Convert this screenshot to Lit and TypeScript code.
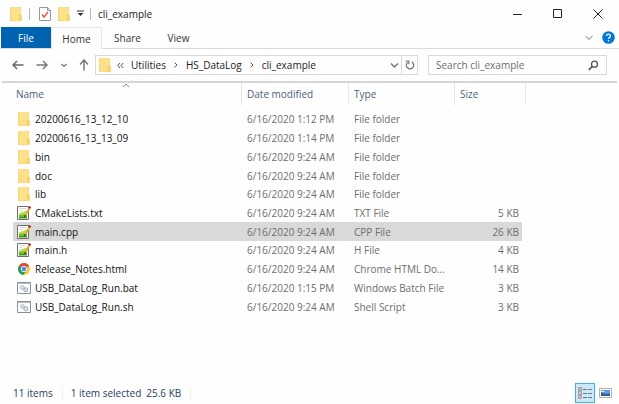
import { LitElement, html, css, svg, nothing } from "lit";
import { customElement, property } from "lit/decorators.js";

type Kind = "folder" | "text" | "chrome" | "script";

interface Entry {
  name: string;
  date: string;
  type: string;
  size: string;
  kind: Kind;
}

const entries: Entry[] = [
  { name: "20200616_13_12_10", date: "6/16/2020 1:12 PM", type: "File folder", size: "", kind: "folder" },
  { name: "20200616_13_13_09", date: "6/16/2020 1:14 PM", type: "File folder", size: "", kind: "folder" },
  { name: "bin", date: "6/16/2020 9:24 AM", type: "File folder", size: "", kind: "folder" },
  { name: "doc", date: "6/16/2020 9:24 AM", type: "File folder", size: "", kind: "folder" },
  { name: "lib", date: "6/16/2020 9:24 AM", type: "File folder", size: "", kind: "folder" },
  { name: "CMakeLists.txt", date: "6/16/2020 9:24 AM", type: "TXT File", size: "5 KB", kind: "text" },
  { name: "main.cpp", date: "6/16/2020 9:24 AM", type: "CPP File", size: "26 KB", kind: "text" },
  { name: "main.h", date: "6/16/2020 9:24 AM", type: "H File", size: "4 KB", kind: "text" },
  { name: "Release_Notes.html", date: "6/16/2020 9:24 AM", type: "Chrome HTML Do...", size: "14 KB", kind: "chrome" },
  { name: "USB_DataLog_Run.bat", date: "6/16/2020 1:15 PM", type: "Windows Batch File", size: "3 KB", kind: "script" },
  { name: "USB_DataLog_Run.sh", date: "6/16/2020 9:24 AM", type: "Shell Script", size: "3 KB", kind: "script" },
];

const shapes = {
  folder: svg`
    <path d="M1 0h11v14H1z" fill="#fde08a"/>
    <path d="M11 0h1v8h-1z" fill="#fbda80"/>
    <path d="M1 0h1v14H1zM1 13h10v1H1z" fill="#f8d779"/>
    <path d="M10 8h3v6h-3z" fill="#fbd774"/>
    <path d="M10 8h1v5h-1z" fill="#f3cc68"/>`,
  text: svg`
    <path d="M.5 .5h11v13H.5z" fill="#fff" stroke="#6f6f6f"/>
    <path d="M2.500 2.500h6M2.500 4.500h3" stroke="#d5ddd2"/>
    <path d="M2 7.500L9.500 4.500V12H2z" fill="#b4e04c"/>
    <path d="M2 9l8-1v4H2z" fill="#6cc12c"/>
    <path d="M2 11h8v1.500H2z" fill="#3f9417"/>
    <path d="M12.300 2.500L8.400 9.200" stroke="#e9a82c" stroke-width="2"/>
    <path d="M13.300 .6l-1 1.800" stroke="#a3282b" stroke-width="2"/>
    <path d="M8.400 9.200l-.9 1.900" stroke="#3b3020" stroke-width="1.200"/>`,
  chrome: svg`
    <circle cx="7" cy="7" r="6" fill="#fbc72e"/>
    <path d="M7 7L1.800 4A6 6 0 0 1 12.200 4z" fill="#dd4b3e"/>
    <path d="M7 7l-5.200-3A6 6 0 0 0 6.400 13L9 9z" fill="#22a05c"/>
    <circle cx="7" cy="7" r="3" fill="#fff"/>
    <circle cx="7" cy="7" r="2.300" fill="#4a8af4"/>`,
  script: svg`
    <path d="M.5 1.500h13v11H.5z" fill="#fbfcfd" stroke="#8c9299"/>
    <path d="M1 2.500h12" stroke="#b9bec4"/>
    <circle cx="5.500" cy="6.500" r="1.800" fill="#dfe8f0" stroke="#a9b7c4"/>
    <circle cx="8.800" cy="8.800" r="2" fill="#dfe8f0" stroke="#97a8b8"/>`,
};

const icon = (kind: Kind) =>
  html`<svg class="icon" width="14" height="14" viewBox="0 0 14 14" aria-hidden="true">${shapes[kind]}</svg>`;

const shared = css`
  * { box-sizing: border-box; }
  button, input { font: inherit; color: inherit; background: none; border: 0; margin: 0; padding: 0; }
  svg { display: block; flex: none; fill: none; }
`;

@customElement("title-bar")
export class TitleBar extends LitElement {
  @property() heading = "";
  static styles = [shared, css`
    :host { display: flex; align-items: center; height: 27px; padding: 0 1px 0 9px; }
    .rule { width: 1px; height: 12px; background: #b5b5b5; }
    .quick { display: flex; align-items: center; gap: 6px; flex: 1; }
    .check { margin-left: 3px; }
    .title { margin: 0 0 0 1px; font-size: 10px; font-weight: 400; color: #222; }
    .controls { display: flex; }
    .controls button { display: grid; place-items: center; width: 40px; height: 27px; }
  `];
  render() {
    return html`
      <div class="quick">
        ${icon("folder")}
        <span class="rule"></span>
        <button class="check" aria-label="Properties">
          <svg width="12" height="14" viewBox="0 0 12 14">
            <path d="M.5 .5h8l3 3v10H.5z" fill="#fff" stroke="#999"/>
            <path d="M8.500 .5v3h3" stroke="#999"/>
            <path d="M3 7.500l2 2.500 4-5" stroke="#e2613a" stroke-width="1.600"/>
          </svg>
        </button>
        <button aria-label="New folder">${icon("folder")}</button>
        <button aria-label="Customize toolbar">
          <svg width="7" height="7" viewBox="0 0 7 7"><path d="M0 1h7" stroke="#333"/><path d="M.5 3h6L3.500 6z" fill="#333"/></svg>
        </button>
        <span class="rule"></span>
        <h1 class="title">${this.heading}</h1>
      </div>
      <div class="controls">
        <button aria-label="Minimize"><svg width="10" height="10"><path d="M0 5.500h9" stroke="#222"/></svg></button>
        <button aria-label="Maximize"><svg width="10" height="10"><path d="M.5 .5h8v8h-8z" stroke="#222"/></svg></button>
        <button aria-label="Close"><svg width="10" height="10"><path d="M.5 .5l9 9M9.500 .5l-9 9" stroke="#222"/></svg></button>
      </div>`;
  }
}

@customElement("ribbon-tabs")
export class RibbonTabs extends LitElement {
  static styles = [shared, css`
    :host { display: flex; height: 22px; padding: 0 4px 0 1px; border-bottom: 1px solid #dadbdc; }
    nav { display: flex; flex: 1; }
    .tab { width: 51px; height: 22px; color: #333; }
    .file { width: 50px; background: #0063b1; color: #fff; height: 21px; }
    .active { border: 1px solid #e8e8ea; border-bottom: 0; background: #fdfdfe; }
    .side { display: flex; align-items: center; gap: 9px; }
  `];
  render() {
    return html`
      <nav>
        <button class="tab file">File</button>
        <button class="tab active">Home</button>
        <button class="tab">Share</button>
        <button class="tab">View</button>
      </nav>
      <div class="side">
        <button aria-label="Expand ribbon">
          <svg width="8" height="6" viewBox="0 0 8 6"><path d="M.5 1L4 4.500 7.500 1" stroke="#aaa" stroke-width="1.200"/></svg>
        </button>
        <button aria-label="Help">
          <svg width="13" height="13" viewBox="0 0 13 13">
            <circle cx="6.500" cy="6.500" r="6.300" fill="#0078d7"/>
            <path d="M4.600 5a1.900 1.800 0 1 1 2.700 1.600c-.6.3-.8.6-.8 1.300" stroke="#fff" stroke-width="1.300"/>
            <circle cx="6.500" cy="9.800" r=".8" fill="#fff"/>
          </svg>
        </button>
      </div>`;
  }
}

@customElement("address-row")
export class AddressRow extends LitElement {
  static styles = [shared, css`
    :host { display: flex; align-items: center; height: 32px; padding: 0 12px; }
    .nav { display: flex; align-items: center; justify-content: space-between; width: 77px; margin-right: 6px; }
    .bar { display: flex; align-items: center; flex: 1; height: 20px; border: 1px solid #d9d9d9; padding-left: 2px; }
    .crumbs { display: flex; align-items: center; flex: 1; gap: 7px; padding-left: 5px; }
    .crumbs a { color: #222; text-decoration: none; }
    .refresh { display: grid; place-items: center; width: 16px; height: 18px; margin-left: 2px; border-left: 1px solid #d9d9d9; }
    .search { display: flex; align-items: center; width: 179px; height: 20px; margin-left: 10px; border: 1px solid #d9d9d9; padding: 0 7px; }
    .search input { flex: 1; min-width: 0; outline: 0; }
    .search input::placeholder { color: #6d6d6d; opacity: 1; }
  `];
  render() {
    const sep = html`<svg width="6" height="8" viewBox="0 0 6 8"><path d="M1.500 1.500L4 4 1.500 6.500" stroke="#555"/></svg>`;
    return html`
      <div class="nav">
        <button aria-label="Back"><svg width="12" height="10" viewBox="0 0 12 10"><path d="M11.500 5H1M5 1L1 5l4 4" stroke="#666" stroke-width="1.500"/></svg></button>
        <button aria-label="Forward"><svg width="12" height="10" viewBox="0 0 12 10"><path d="M.5 5H11M7 1l4 4-4 4" stroke="#777" stroke-width="1.500"/></svg></button>
        <button aria-label="Recent"><svg width="6" height="5" viewBox="0 0 6 5"><path d="M.5 1L3 3.500 5.500 1" stroke="#777" stroke-width="1.200"/></svg></button>
        <button aria-label="Up"><svg width="10" height="12" viewBox="0 0 10 12"><path d="M5 11.500V1M1 5.500L5 1l4 4.500" stroke="#777" stroke-width="1.500"/></svg></button>
      </div>
      <div class="bar">
        ${icon("folder")}
        <div class="crumbs">
          <svg width="7" height="7" viewBox="0 0 7 7"><path d="M3 1L.8 3.500 3 6M6.200 1L4 3.500 6.200 6" stroke="#555"/></svg>
          <a href="#utilities">Utilities</a>${sep}<a href="#hs-datalog">HS_DataLog</a>${sep}<a href="#cli-example">cli_example</a>
        </div>
        <button aria-label="Previous locations"><svg width="9" height="7" viewBox="0 0 9 7"><path d="M1 1.500L4.500 5 8 1.500" stroke="#777" stroke-width="1.500"/></svg></button>
        <button class="refresh" aria-label="Refresh">
          <svg width="10" height="12" viewBox="0 0 10 12"><path d="M6.800 2.900A3.700 3.700 0 1 1 2.600 3.300" stroke="#777" stroke-width="1.300"/><path d="M.6 2h3.200v3.200" stroke="#777" stroke-width="1.200"/></svg>
        </button>
      </div>
      <div class="search">
        <input type="text" aria-label="Search cli_example" placeholder="Search cli_example">
        <svg width="11" height="11" viewBox="0 0 11 11"><circle cx="6.500" cy="4.200" r="3" stroke="#555" stroke-width="1.300"/><path d="M4.300 6.400L.8 9.900" stroke="#555" stroke-width="1.600"/></svg>
      </div>`;
  }
}

@customElement("file-list")
export class FileList extends LitElement {
  @property() selected = "";
  static styles = [shared, css`
    :host { display: block; margin: 0 2px; border-top: 2px solid #d6d6d6; padding-left: 11px; }
    table { table-layout: fixed; width: 513px; height: 233px; border-collapse: separate; border-spacing: 0; }
    .name { width: 229px; }
    .date { width: 107px; }
    .type { width: 106px; }
    .size { width: 71px; }
    th { height: 27px; padding: 0; vertical-align: top; text-align: left; font-weight: 400; }
    th button { display: block; position: relative; width: 100%; height: 22px; padding: 0 5px; text-align: left; color: #4c607a; border-right: 1px solid #e5e5e5; }
    th.name button { padding-left: 3px; }
    .sort { position: absolute; top: 0; left: 50%; margin-left: -5px; }
    td { padding: 0 5px; color: #6d6d6d; line-height: 14px; white-space: nowrap; }
    td:first-child { padding-left: 4px; color: #111; }
    td:last-child { text-align: right; border-right: 4px solid #fefefe; padding-right: 3px; }
    .file { display: flex; align-items: center; gap: 4px; }
    .selected td { background: #d9d9d9; background-clip: padding-box; }
  `];
  render() {
    return html`
      <table>
        <thead>
          <tr>
            <th class="name" aria-sort="ascending">
              <button>Name<svg class="sort" width="8" height="5" viewBox="0 0 8 5"><path d="M.8 4L4 1l3.200 3" stroke="#888"/></svg></button>
            </th>
            <th class="date"><button>Date modified</button></th>
            <th class="type"><button>Type</button></th>
            <th class="size"><button>Size</button></th>
          </tr>
        </thead>
        <tbody>
          ${entries.map((e) => html`
            <tr class=${e.name === this.selected ? "selected" : nothing}>
              <td><span class="file">${icon(e.kind)}${e.name}</span></td>
              <td>${e.date}</td>
              <td>${e.type}</td>
              <td>${e.size}</td>
            </tr>`)}
        </tbody>
      </table>`;
  }
}

@customElement("status-bar")
export class StatusBar extends LitElement {
  static styles = [shared, css`
    :host { display: flex; align-items: center; height: 22px; padding: 0 4px 0 13px; color: #26415f; }
    .info { display: flex; flex: 1; }
    .cell { padding-right: 9px; margin-right: 8px; border-right: 1px solid #f0f0f0; }
    .cell span { margin-left: 5px; }
    .view { display: grid; place-items: center; width: 20px; height: 20px; }
    .on { background: #c9e9f8; border: 1px solid #3fb0e0; }
  `];
  render() {
    return html`
      <div class="info">
        <div class="cell">11 items</div>
        <div class="cell">1 item selected<span>25.6 KB</span></div>
      </div>
      <button class="view on" aria-label="Details" aria-pressed="true">
        <svg width="14" height="12" viewBox="0 0 14 12">
          <path d="M.5 .5h3v3h-3zM.5 4.500h3v3h-3zM.5 8.500h3v3h-3z" fill="#fff" stroke="#9b9fa4"/>
          <path d="M1 2h2M1 10h2" stroke="#e0685f"/>
          <path d="M1 6h2" stroke="#c0908c"/>
          <path d="M5 2.500h4M10 2.500h4M5 6.500h4M10 6.500h4M5 10.500h4M10 10.500h4" stroke="#6a7880"/>
        </svg>
      </button>
      <button class="view" aria-label="Large thumbnails" aria-pressed="false">
        <svg width="13" height="10" viewBox="0 0 13 10">
          <path d="M.5 .5h12v9H.5z" fill="#fff" stroke="#b0b0b0"/>
          <path d="M2 2h9v6H2z" fill="#5f9bdc"/>
          <path d="M2 4.500l4 1.500 5-.5V8H2z" fill="#2f5f88"/>
          <path d="M2 3.500q2-1.500 4 .5H2z" fill="#e8f3fc"/>
        </svg>
      </button>`;
  }
}

@customElement("app-root")
export class AppRoot extends LitElement {
  static styles = [shared, css`
    :host { display: flex; flex-direction: column; min-height: 100vh; background: #fefefe; font: 10px/14px "Open Sans", "Noto Sans", sans-serif; }
    file-list { flex: 1; }
  `];
  render() {
    return html`
      <title-bar heading="cli_example"></title-bar>
      <ribbon-tabs></ribbon-tabs>
      <address-row></address-row>
      <file-list selected="main.cpp"></file-list>
      <status-bar></status-bar>`;
  }
}
